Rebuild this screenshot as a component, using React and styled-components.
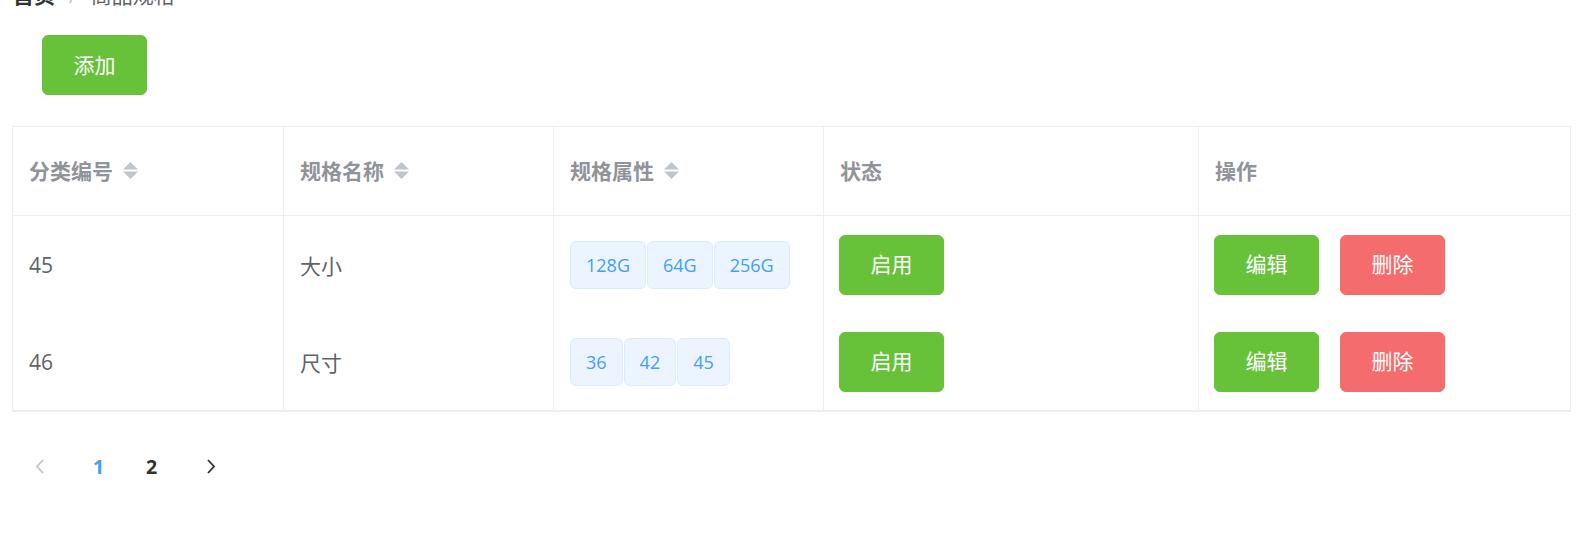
import React from 'react'
import styled, { createGlobalStyle } from 'styled-components'

const COLORS = {
  primary: '#409eff',
  success: '#67c23a',
  danger: '#f56c6c',
  title: '#303133',
  text: '#606266',
  secondary: '#909399',
  placeholder: '#c0c4cc',
  border: '#ebeef5'
}

const SPECS = [
  { id: 45, name: '大小', values: ['128G', '64G', '256G'] },
  { id: 46, name: '尺寸', values: ['36', '42', '45'] }
]

const COLUMNS = [
  { title: '分类编号', width: 271, sortable: true },
  { title: '规格名称', width: 270, sortable: true },
  { title: '规格属性', width: 270, sortable: true },
  { title: '状态', width: 375 },
  { title: '操作' }
]

const GlobalStyle = createGlobalStyle`
  *, *::before, *::after {
    box-sizing: border-box;
  }
  body {
    margin: 0;
    background: #fff;
    font-family: "Open Sans", "Noto Sans CJK SC", sans-serif;
    overflow: hidden;
  }
`

const SortCaret = () => (
  <CaretWrapper>
    <svg width="15" height="17" viewBox="0 0 15 17">
      <polygon points="0,7.5 7.5,0 15,7.5" />
      <polygon points="0,9.5 15,9.5 7.5,17" />
    </svg>
  </CaretWrapper>
)

const Chevron = ({ dir }) => (
  <svg width="10" height="15" viewBox="0 0 10 15">
    <polyline
      points={dir === 'left' ? '8,1 2,7.5 8,14' : '2,1 8,7.5 2,14'}
      fill="none"
      stroke="currentColor"
      strokeWidth="1.8"
    />
  </svg>
)

const App = () => {
  return (
    <Page>
      <GlobalStyle />
      <Breadcrumb>
        <strong>首页</strong>
        <Separator>/</Separator>
        <span>商品规格</span>
      </Breadcrumb>

      <Toolbar>
        <Button variant="success">添加</Button>
      </Toolbar>

      <Table>
        <colgroup>
          {COLUMNS.map((col) => (
            <col key={col.title} style={col.width ? { width: col.width } : undefined} />
          ))}
        </colgroup>
        <thead>
          <tr>
            {COLUMNS.map((col) => (
              <HeadCell key={col.title}>
                <HeadLabel>
                  {col.title}
                  {col.sortable && <SortCaret />}
                </HeadLabel>
              </HeadCell>
            ))}
          </tr>
        </thead>
        <tbody>
          {SPECS.map((spec) => (
            <tr key={spec.id}>
              <Cell>{spec.id}</Cell>
              <Cell>{spec.name}</Cell>
              <Cell>
                <TagList>
                  {spec.values.map((v) => (
                    <Tag key={v}>{v}</Tag>
                  ))}
                </TagList>
              </Cell>
              <Cell>
                <Button variant="success">启用</Button>
              </Cell>
              <Cell>
                <Actions>
                  <Button variant="success">编辑</Button>
                  <Button variant="danger">删除</Button>
                </Actions>
              </Cell>
            </tr>
          ))}
        </tbody>
      </Table>

      <Pagination>
        <PageArrow side="prev" disabled>
          <Chevron dir="left" />
        </PageArrow>
        <PageNumber active>1</PageNumber>
        <PageNumber>2</PageNumber>
        <PageArrow side="next">
          <Chevron dir="right" />
        </PageArrow>
      </Pagination>
    </Page>
  )
}

const Page = styled.div`
  padding: 0 7px 0 12px;
`

const Breadcrumb = styled.div`
  margin-top: -15px;
  padding-left: 1px;
  display: flex;
  align-items: center;
  font-size: 21px;
  line-height: 21px;
  color: ${COLORS.text};

  strong {
    color: ${COLORS.title};
    font-weight: 700;
  }
`

const Separator = styled.span`
  margin: 0 14px;
  color: ${COLORS.placeholder};
`

const Toolbar = styled.div`
  margin-top: 29px;
  padding-left: 30px;
  display: flex;
`

const Button = styled.button`
  width: 105px;
  height: 60px;
  padding: 0;
  border-radius: 6px;
  border: 1.5px solid ${({ variant }) => (variant === 'danger' ? COLORS.danger : COLORS.success)};
  background: ${({ variant }) => (variant === 'danger' ? COLORS.danger : COLORS.success)};
  color: #fff;
  font-family: inherit;
  font-size: 21px;
  line-height: 1;
  cursor: pointer;
`

const Table = styled.table`
  margin-top: 31px;
  width: 100%;
  table-layout: fixed;
  border-collapse: separate;
  border-spacing: 0;
  border-top: 1px solid ${COLORS.border};
  border-left: 1px solid ${COLORS.border};
  border-bottom: 2px solid ${COLORS.border};
`

const HeadCell = styled.th`
  height: 89px;
  padding: 0 15px 0 16px;
  text-align: left;
  border-right: 1px solid ${COLORS.border};
  border-bottom: 1px solid ${COLORS.border};
  font-size: 21px;
  font-weight: 700;
  color: ${COLORS.secondary};
`

const HeadLabel = styled.div`
  display: flex;
  align-items: center;
  line-height: 34px;
`

const CaretWrapper = styled.span`
  display: inline-flex;
  margin-left: 10px;
  margin-top: -2px;

  svg {
    fill: ${COLORS.placeholder};
  }
`

const Cell = styled.td`
  height: 97px;
  padding: 0 15px 0 16px;
  border-right: 1px solid ${COLORS.border};
  font-size: 21px;
  color: ${COLORS.text};
  vertical-align: middle;

  &:nth-child(n + 4) {
    padding-left: 15px;
  }
`

const TagList = styled.div`
  display: flex;
  gap: 1px;
`

const Tag = styled.span`
  display: inline-flex;
  align-items: center;
  height: 48px;
  padding: 0 15px;
  border: 1px solid #d9ecff;
  border-radius: 6px;
  background: #ecf5ff;
  color: ${COLORS.primary};
  font-size: 18px;
`

const Actions = styled.div`
  display: flex;
  gap: 21px;
`

const Pagination = styled.div`
  margin-top: 33px;
  padding-left: 13px;
  display: flex;
  align-items: center;
  height: 42px;
`

const PageArrow = styled.span`
  width: 47px;
  height: 42px;
  display: flex;
  align-items: center;
  justify-content: center;
  ${({ side }) => (side === 'prev' ? 'padding-right: 18px;' : 'padding-left: 18px;')}
  color: ${({ disabled }) => (disabled ? COLORS.placeholder : COLORS.title)};
`

const PageNumber = styled.span`
  width: 53px;
  height: 42px;
  display: flex;
  align-items: center;
  justify-content: center;
  font-size: 19.5px;
  font-weight: 700;
  color: ${({ active }) => (active ? COLORS.primary : COLORS.title)};
`

export default App
